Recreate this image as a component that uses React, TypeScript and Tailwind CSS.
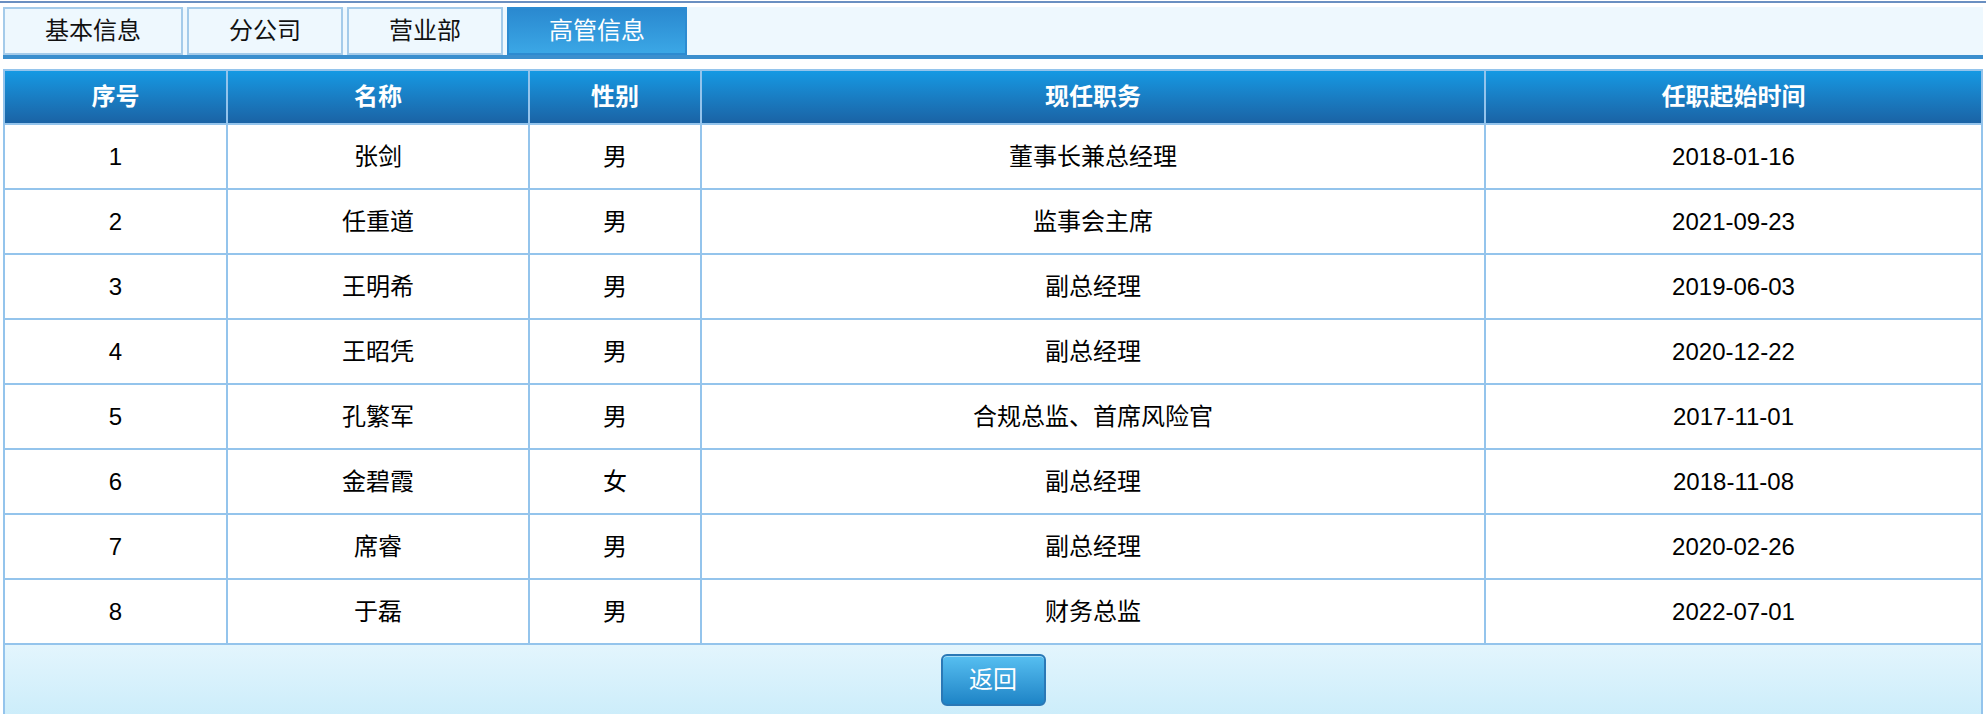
import React from 'react';

const tabs = ['基本信息', '分公司', '营业部', '高管信息'];

const columns = ['序号', '名称', '性别', '现任职务', '任职起始时间'];

const rows = [
  { no: 1, name: '张剑', sex: '男', title: '董事长兼总经理', date: '2018-01-16' },
  { no: 2, name: '任重道', sex: '男', title: '监事会主席', date: '2021-09-23' },
  { no: 3, name: '王明希', sex: '男', title: '副总经理', date: '2019-06-03' },
  { no: 4, name: '王昭凭', sex: '男', title: '副总经理', date: '2020-12-22' },
  { no: 5, name: '孔繁军', sex: '男', title: '合规总监、首席风险官', date: '2017-11-01' },
  { no: 6, name: '金碧霞', sex: '女', title: '副总经理', date: '2018-11-08' },
  { no: 7, name: '席睿', sex: '男', title: '副总经理', date: '2020-02-26' },
  { no: 8, name: '于磊', sex: '男', title: '财务总监', date: '2022-07-01' },
];

export default function App() {
  const [active, setActive] = React.useState(3);

  return (
    <div className="w-[1986px] h-[714px] overflow-hidden bg-white text-[24px] text-black font-['Liberation_Sans','Noto_Sans_CJK_SC',sans-serif]">
      <div className="mt-px h-[2px] bg-[#6a8fc1]" />

      <div className="mx-[3px] mt-[4px]">
        <div className="flex gap-[4px] h-[48px] bg-[#eef8fe]">
          {tabs.map((t, i) => (
            <button
              key={t}
              onClick={() => setActive(i)}
              className={
                i === active
                  ? 'h-full px-[40px] border-2 border-[#2c8bd1] bg-gradient-to-b from-[#2a89d0] to-[#3ba7e6] text-white leading-none'
                  : 'h-full px-[40px] border-2 border-[#a4cbea] bg-[#eef8fe] text-[#111] leading-none'
              }
            >
              {t}
            </button>
          ))}
        </div>
        <div className="h-[4px] bg-[#3b8fce]" />
      </div>

      <div className="mx-[3px] mt-[10px] p-[2px] pb-0 bg-[#94c4ec] grid grid-cols-[221px_300px_170px_782px_495px] gap-[2px]">
        {columns.map((c) => (
          <div
            key={c}
            className="h-[52px] flex items-center justify-center bg-gradient-to-b from-[#1599e3] to-[#1a63a5] text-white font-bold"
          >
            {c}
          </div>
        ))}

        {rows.map((r) => (
          <React.Fragment key={r.no}>
            <div className="h-[63px] flex items-center justify-center bg-white">{r.no}</div>
            <div className="h-[63px] flex items-center justify-center bg-white">{r.name}</div>
            <div className="h-[63px] flex items-center justify-center bg-white">{r.sex}</div>
            <div className="h-[63px] flex items-center justify-center bg-white">{r.title}</div>
            <div className="h-[63px] flex items-center justify-center bg-white">{r.date}</div>
          </React.Fragment>
        ))}

        <div className="col-span-5 h-[80px] flex justify-center pt-[9px] bg-gradient-to-b from-[#e3f5fd] to-[#c9ecfa]">
          <button className="w-[105px] h-[52px] rounded-[6px] border-2 border-[#2a78b6] bg-gradient-to-b from-[#56bff1] to-[#1d84c6] text-white shadow-[inset_0_1px_0_rgba(255,255,255,0.45)]">
            返回
          </button>
        </div>
      </div>
    </div>
  );
}
